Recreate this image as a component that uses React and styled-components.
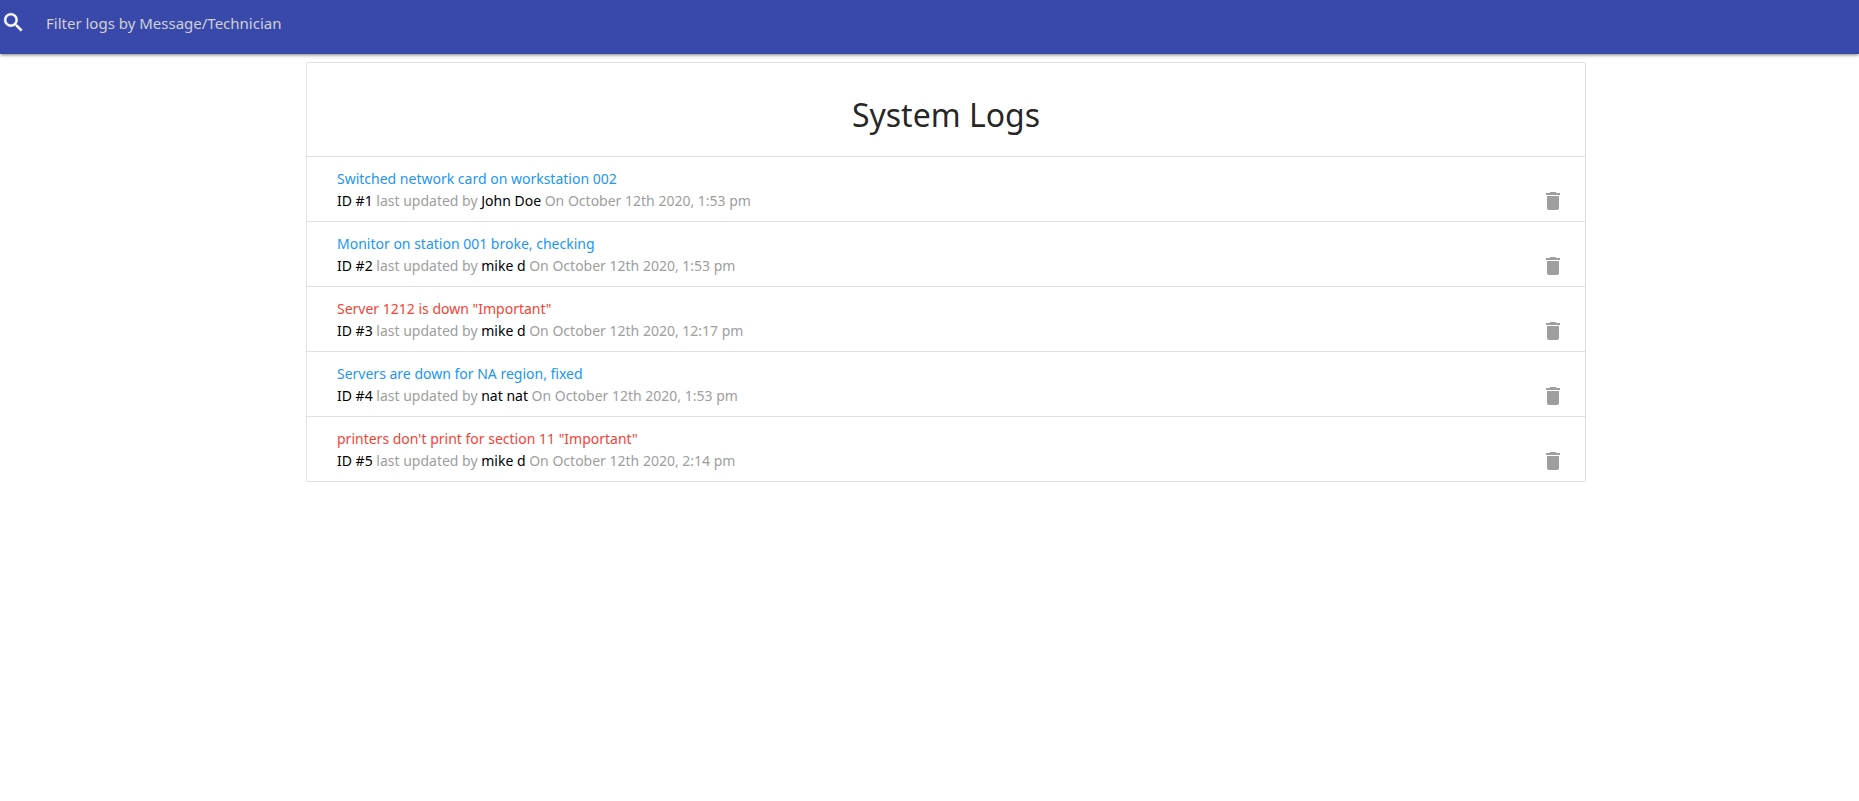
import React from "react";
import styled, { createGlobalStyle } from "styled-components";

const GlobalStyle = createGlobalStyle`
  * { box-sizing: border-box; }
  body {
    margin: 0;
    background: #fff;
    color: rgba(0, 0, 0, 0.87);
    font-family: "Segoe UI", "Noto Sans", "Open Sans", sans-serif;
    font-size: 14px;
    line-height: 22px;
  }
`;

const NavBar = styled.nav`
  height: 54px;
  margin-bottom: 8px;
  background: #3949ab;
  box-shadow: 0 2px 2px 0 rgba(0, 0, 0, 0.14), 0 3px 1px -2px rgba(0, 0, 0, 0.12),
    0 1px 5px 0 rgba(0, 0, 0, 0.2);
`;

const SearchForm = styled.form`
  display: flex;
`;

const SearchLabel = styled.label`
  display: flex;
  width: 46px;
  height: 44px;
  padding-left: 1px;
  align-items: center;
  color: #fff;
`;

const SearchInput = styled.input`
  flex: 1;
  min-width: 0;
  height: 46px;
  padding: 0;
  border: 0;
  outline: 0;
  background: transparent;
  color: #fff;
  font: inherit;
  font-size: 15px;
  &::placeholder { color: #d1d1d1; opacity: 1; }
`;

const Page = styled.main`
  padding-left: 33px;
`;

const Container = styled.div`
  width: 71%;
  max-width: 1280px;
  margin: 0 auto;
`;

const Collection = styled.ul`
  margin: 0;
  padding: 0;
  list-style: none;
  border: 1px solid #e0e0e0;
  border-radius: 2px;
`;

const Header = styled.li`
  padding: 30px 20px 20px;
  text-align: center;
`;

const Title = styled.h1`
  margin: 0;
  font-size: 32px;
  font-weight: 400;
  line-height: 43px;
`;

const LogItem = styled.li`
  display: flex;
  align-items: flex-start;
  justify-content: space-between;
  padding: 11px 20px 8px 30px;
  border-top: 1px solid #e0e0e0;
`;

const Message = styled.a`
  display: block;
  color: ${(p) => (p.$attention ? "#f44336" : "#2196f3")};
  text-decoration: none;
`;

const Details = styled.div`
  color: #9e9e9e;
`;

const Strong = styled.span`
  color: #000;
`;

const DeleteButton = styled.button`
  display: flex;
  padding: 21px 0 0;
  border: 0;
  background: none;
  color: #9e9e9e;
  cursor: pointer;
`;

const Icon = ({ d, size = 24, bold = false }) => (
  <svg
    width={size}
    height={size}
    viewBox="0 0 24 24"
    fill="currentColor"
    stroke={bold ? "currentColor" : "none"}
    strokeWidth="0.4"
    aria-hidden="true"
  >
    <path d={d} />
  </svg>
);

const SEARCH =
  "M15.5 14h-.79l-.28-.27A6.471 6.471 0 0 0 16 9.5 6.5 6.5 0 1 0 9.5 16c1.61 0 3.09-.59 4.23-1.57l.27.28v.79l5 4.99L20.49 19l-4.99-5zm-6 0C7.01 14 5 11.99 5 9.5S7.01 5 9.5 5 14 7.01 14 9.5 11.99 14 9.5 14z";
const TRASH = "M6 19c0 1.1.9 2 2 2h8c1.1 0 2-.9 2-2V7H6v12zM19 4h-3.5l-1-1h-5l-1 1H5v2h14V4z";

const logs = [
  { id: 1, message: "Switched network card on workstation 002", tech: "John Doe", date: "October 12th 2020, 1:53 pm" },
  { id: 2, message: "Monitor on station 001 broke, checking", tech: "mike d", date: "October 12th 2020, 1:53 pm" },
  { id: 3, message: 'Server 1212 is down "Important"', tech: "mike d", date: "October 12th 2020, 12:17 pm", attention: true },
  { id: 4, message: "Servers are down for NA region, fixed", tech: "nat nat", date: "October 12th 2020, 1:53 pm" },
  { id: 5, message: 'printers don\'t print for section 11 "Important"', tech: "mike d", date: "October 12th 2020, 2:14 pm", attention: true },
];

export default function App() {
  return (
    <>
      <GlobalStyle />
      <NavBar>
        <SearchForm>
          <SearchLabel htmlFor="search" aria-label="Search logs">
            <Icon d={SEARCH} size={25} bold />
          </SearchLabel>
          <SearchInput id="search" type="search" placeholder="Filter logs by Message/Technician" />
        </SearchForm>
      </NavBar>
      <Page>
        <Container>
          <Collection>
            <Header>
              <Title>System Logs</Title>
            </Header>
            {logs.map((log) => (
              <LogItem key={log.id}>
                <div>
                  <Message href="#edit-log" $attention={log.attention}>{log.message}</Message>
                  <Details>
                    <Strong>ID #{log.id}</Strong> last updated by <Strong>{log.tech}</Strong> On {log.date}
                  </Details>
                </div>
                <DeleteButton type="button" aria-label={`Delete log ${log.id}`}>
                  <Icon d={TRASH} />
                </DeleteButton>
              </LogItem>
            ))}
          </Collection>
        </Container>
      </Page>
    </>
  );
}
